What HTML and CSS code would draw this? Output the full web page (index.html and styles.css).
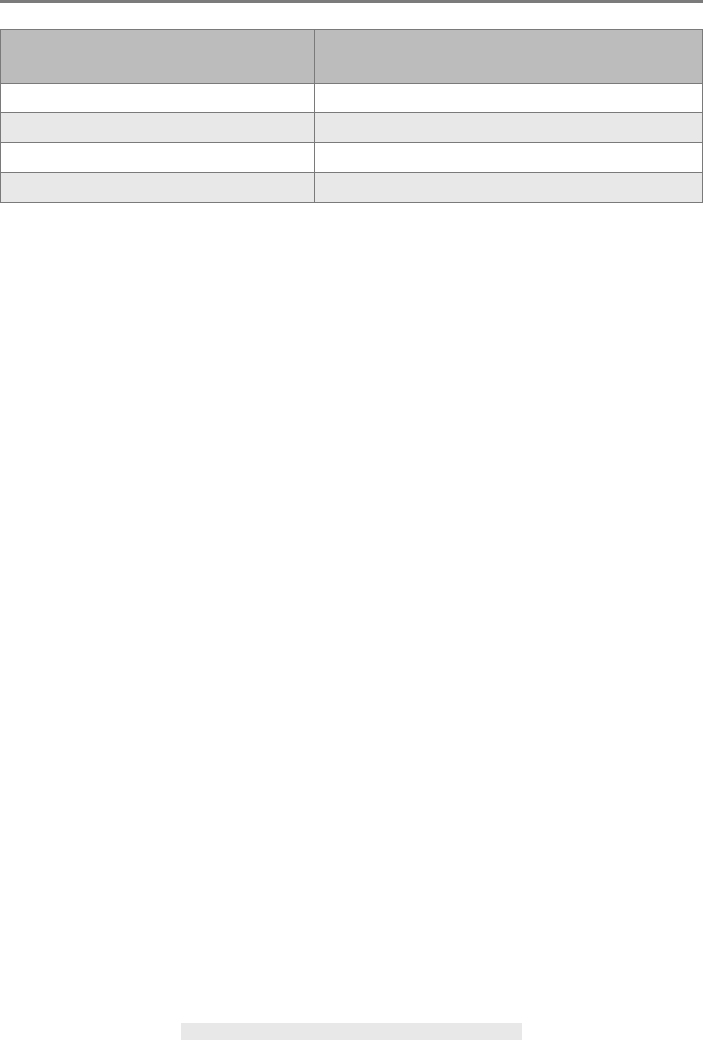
FILE: index.html
```html
<!DOCTYPE html>
<html>
<head>
<meta charset="utf-8">
<link rel="stylesheet" href="styles.css">
</head>
<body>
<div class="topbar"></div>
<table class="grid">
  <thead>
    <tr><th class="c1"></th><th class="c2"></th></tr>
  </thead>
  <tbody>
    <tr class="first"><td></td><td></td></tr>
    <tr class="alt"><td></td><td></td></tr>
    <tr><td></td><td></td></tr>
    <tr class="alt"><td></td><td></td></tr>
  </tbody>
</table>
<div class="footer"><div class="footbar"></div></div>
</body>
</html>
```
FILE: styles.css
```css
html, body {
  margin: 0;
  padding: 0;
  background: #ffffff;
  font-family: "Liberation Sans", Arial, sans-serif;
}
.topbar {
  height: 3px;
  background: #7b7b7b;
  margin-bottom: 26px;
}
.grid {
  border-collapse: collapse;
  width: 703px;
  table-layout: fixed;
}
.grid th, .grid td {
  border: 1px solid #7a7a7a;
  padding: 0;
}
.grid th {
  background: #bcbcbc;
  height: 53px;
}
.grid .c1 { width: 313px; }
.grid td {
  height: 29px;
}
.grid tr.first td {
  height: 28px;
}
.grid tr.alt td {
  background: #e8e8e8;
}
.footer {
  display: flex;
  justify-content: flex-start;
  padding-left: 181px;
  margin-top: 820px;
}
.footbar {
  width: 341px;
  height: 20px;
  background: #e8e8e8;
}
```
